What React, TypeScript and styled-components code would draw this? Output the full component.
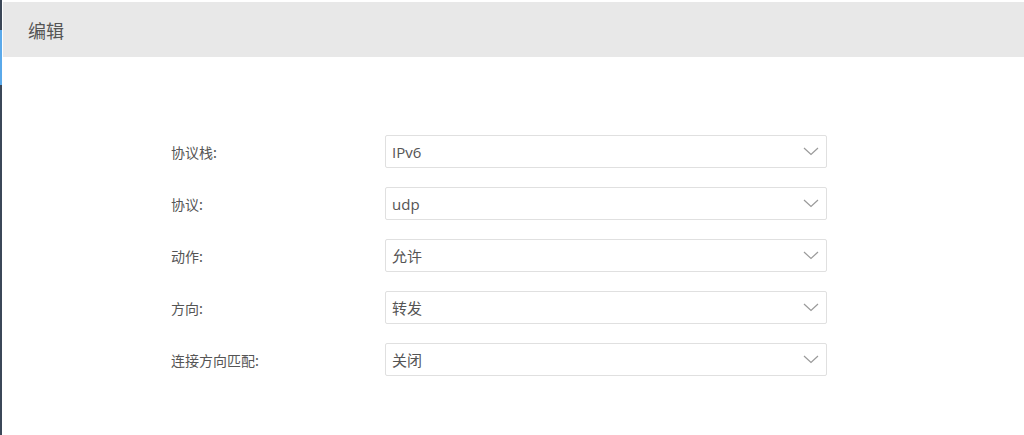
import React from "react";
import styled, { createGlobalStyle } from "styled-components";

const GlobalStyle = createGlobalStyle`
  html, body {
    margin: 0;
    padding: 0;
    background: #ffffff;
    font-family: "Open Sans", "Noto Sans CJK SC", sans-serif;
  }
`;

const Page = styled.div`
  display: flex;
  width: 1024px;
  height: 435px;
  overflow: hidden;
  background: #fff;
`;

const SideRail = styled.div`
  width: 2px;
  flex: none;
  display: flex;
  flex-direction: column;
  background: #3b4758;
`;

const RailMark = styled.div<{ $top: number; $height: number }>`
  margin-top: ${(p) => p.$top}px;
  height: ${(p) => p.$height}px;
  background: #5aa9ea;
`;

const Main = styled.div`
  flex: 1;
  margin-left: 1px;
  padding-top: 2px;
  display: flex;
  flex-direction: column;
`;

const Header = styled.div`
  height: 55px;
  background: #e8e8e8;
  display: flex;
  align-items: center;
  padding-left: 25px;
  font-family: "Noto Sans CJK SC", sans-serif;
  font-size: 18px;
  color: #555;
`;

const Form = styled.div`
  padding: 78px 0 0 168px;
  display: flex;
  flex-direction: column;
  gap: 19px;
`;

const Row = styled.div`
  display: flex;
  align-items: center;
`;

const Label = styled.div`
  width: 214px;
  font-family: "Noto Sans CJK SC", sans-serif;
  font-size: 14px;
  color: #555;
`;

const Select = styled.div`
  box-sizing: border-box;
  width: 442px;
  height: 33px;
  border: 1px solid #e0e0e0;
  border-radius: 2px;
  display: flex;
  align-items: center;
  justify-content: space-between;
  padding: 0 7px 0 6px;
  font-family: "Open Sans", "Noto Sans CJK SC", sans-serif;
  font-size: 15px;
  color: #555;
`;

const Chevron = () => (
  <svg width="16" height="9" viewBox="0 0 16 9">
    <path d="M1 1 L8 7.5 L15 1" fill="none" stroke="#9a9a9a" strokeWidth="1.2" />
  </svg>
);

const fields = [
  { label: "协议栈:", value: "IPv6" },
  { label: "协议:", value: "udp" },
  { label: "动作:", value: "允许" },
  { label: "方向:", value: "转发" },
  { label: "连接方向匹配:", value: "关闭" },
];

export default function App() {
  return (
    <Page>
      <GlobalStyle />
      <SideRail>
        <RailMark $top={30} $height={55} />
      </SideRail>
      <Main>
        <Header>编辑</Header>
        <Form>
          {fields.map((f) => (
            <Row key={f.label}>
              <Label>{f.label}</Label>
              <Select>
                <span>{f.value}</span>
                <Chevron />
              </Select>
            </Row>
          ))}
        </Form>
      </Main>
    </Page>
  );
}
